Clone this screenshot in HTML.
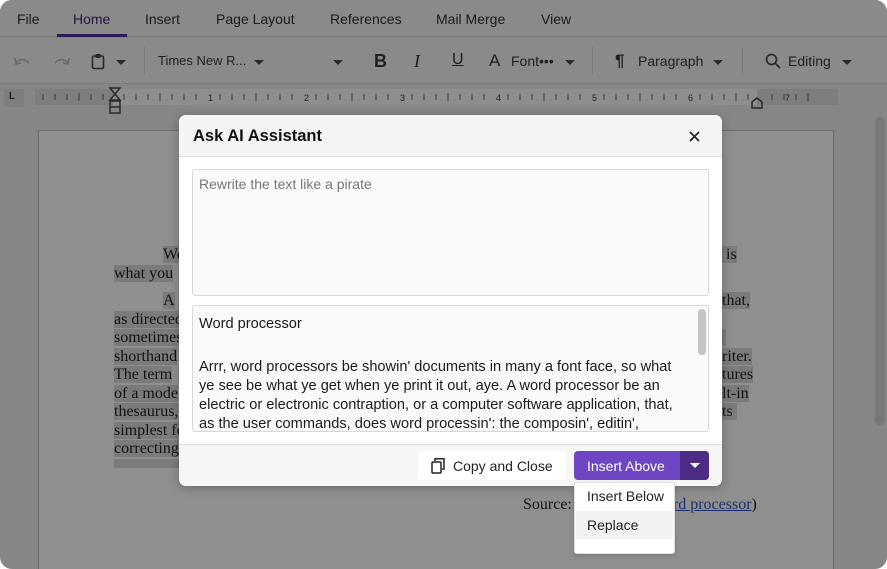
<!DOCTYPE html>
<html><head><meta charset="utf-8"><style>
*{box-sizing:border-box;margin:0;padding:0}
body{width:887px;height:569px;overflow:hidden;background:#fff;font-family:"Liberation Sans",sans-serif;position:relative}
.win{position:absolute;left:0;top:0;width:887px;height:569px;border-radius:12px;overflow:hidden;background:#868686}
.abs{position:absolute}
.menu{left:0;top:0;width:887px;height:37px;background:#8a8a8a;border-bottom:1px solid #7a7a7a}
.menu span{position:absolute;top:11px;font-size:14px;color:#1a1a1a}
.tb{left:0;top:38px;width:887px;height:46px;background:#8a8a8a;border-bottom:1px solid #7c7c7c}
.tb span{position:absolute;font-size:14px;color:#202020}
.car{position:absolute;width:0;height:0;border-left:5px solid transparent;border-right:5px solid transparent;border-top:5px solid #2a2a2a}
.doc{font-family:"Liberation Serif",serif;font-size:16px;color:#111;white-space:nowrap}
.hl{background:#7b7b7b}
</style></head><body><div class="win">
<div class="abs menu">
<span style="left:17px">File</span>
<span style="left:73px;color:#2a1245">Home</span>
<span style="left:145px">Insert</span>
<span style="left:216px">Page Layout</span>
<span style="left:330px">References</span>
<span style="left:436px">Mail Merge</span>
<span style="left:541px">View</span>
<div class="abs" style="left:57px;top:34px;width:70px;height:3px;background:#2e1a55"></div>
</div>
<div class="abs tb">
<svg class="abs" style="left:13px;top:17px" width="20" height="14" viewBox="0 0 20 14"><path d="M3 8 Q9 1 16 8" stroke="#6a6a6a" stroke-width="1.6" fill="none"/><path d="M2 3 L3 9 L8 8" stroke="#6a6a6a" stroke-width="1.6" fill="none"/></svg>
<svg class="abs" style="left:51px;top:17px" width="20" height="14" viewBox="0 0 20 14"><path d="M4 8 Q11 1 17 8" stroke="#6a6a6a" stroke-width="1.6" fill="none"/><path d="M18 3 L17 9 L12 8" stroke="#6a6a6a" stroke-width="1.6" fill="none"/></svg>
<svg class="abs" style="left:91px;top:15px" width="14" height="17" viewBox="0 0 14 17"><rect x="1.5" y="3" width="11" height="12.5" rx="1.5" stroke="#2a2a2a" stroke-width="1.6" fill="none"/><rect x="4.5" y="1" width="5" height="4" fill="#2a2a2a"/></svg>
<div class="car" style="left:116px;top:22px"></div>
<div class="abs" style="left:144px;top:9px;width:1px;height:28px;background:#7a7a7a"></div>
<span style="left:158px;top:15px;font-size:13px">Times New R...</span>
<div class="car" style="left:254px;top:22px"></div>
<div class="car" style="left:333px;top:22px"></div>
<span style="left:374px;top:13px;font-size:18px;font-weight:bold">B</span>
<span style="left:414px;top:13px;font-size:18px;font-style:italic;font-family:'Liberation Serif'">I</span>
<span style="left:452px;top:13px;font-size:16px;text-decoration:underline">U</span>
<span style="left:489px;top:13px;font-size:17px">A</span>
<span style="left:511px;top:15px">Font•••</span>
<div class="car" style="left:565px;top:22px"></div>
<div class="abs" style="left:592px;top:9px;width:1px;height:28px;background:#7a7a7a"></div>
<span style="left:615px;top:13px;font-size:17px;font-weight:bold">¶</span>
<span style="left:638px;top:15px">Paragraph</span>
<div class="car" style="left:713px;top:22px"></div>
<div class="abs" style="left:742px;top:9px;width:1px;height:28px;background:#7a7a7a"></div>
<svg class="abs" style="left:765px;top:15px" width="16" height="16" viewBox="0 0 16 16"><circle cx="6.5" cy="6.5" r="5" stroke="#2a2a2a" stroke-width="1.7" fill="none"/><path d="M10 10 L15 15" stroke="#2a2a2a" stroke-width="1.8"/></svg>
<span style="left:788px;top:15px">Editing</span>
<div class="car" style="left:842px;top:22px"></div>
</div>
<div class="abs" style="left:4px;top:89px;width:20px;height:18px;background:#7e7e7e"></div>
<span class="abs" style="left:9px;top:91px;font-size:10px;font-weight:bold;color:#222">L</span>
<div class="abs" style="left:35px;top:89px;width:803px;height:16px;background:#8e8e8e"></div>
<div class="abs" style="left:35px;top:89px;width:78px;height:16px;background:#7e7e7e"></div>
<div class="abs" style="left:757px;top:89px;width:81px;height:16px;background:#7e7e7e"></div>
<svg class="abs" style="left:35px;top:89px" width="803" height="16">
<g stroke="#3a3a3a" stroke-width="1">
<path d="M8 5v6M20 5v6M32 5v6M44 4v8M56 5v6M68 5v6M89 5v6M101 5v6M113 5v6M125 4v8M137 5v6M149 5v6M161 5v6M185 5v6M197 5v6M209 5v6M221 4v8M233 5v6M245 5v6M257 5v6M281 5v6M293 5v6M305 5v6M317 4v8M329 5v6M341 5v6M353 5v6M377 5v6M389 5v6M401 5v6M413 4v8M425 5v6M437 5v6M449 5v6M473 5v6M485 5v6M497 5v6M509 4v8M521 5v6M533 5v6M545 5v6M569 5v6M581 5v6M593 5v6M605 4v8M617 5v6M629 5v6M641 5v6M665 5v6M677 5v6M689 5v6M701 4v8M713 5v6M737 5v6M749 5v6M761 5v6M773 4v8"/>
</g>
<g font-size="9" fill="#222" font-family="Liberation Sans"><text x="173" y="12">1</text><text x="269" y="12">2</text><text x="365" y="12">3</text><text x="461" y="12">4</text><text x="557" y="12">5</text><text x="653" y="12">6</text><text x="750" y="12">7</text></g>
</svg>
<svg class="abs" style="left:108px;top:87px" width="14" height="28"><path d="M2 1h10L2 13h10z" stroke="#2a2a2a" stroke-width="1.5" fill="none"/><rect x="2" y="14" width="10" height="12" stroke="#2a2a2a" stroke-width="1.5" fill="none"/><path d="M2 20h10" stroke="#2a2a2a" stroke-width="1.5"/></svg>
<svg class="abs" style="left:750px;top:97px" width="14" height="12"><path d="M2 11V5l5-4 5 4v6z" stroke="#2a2a2a" stroke-width="1.5" fill="none"/></svg>
<div class="abs" style="left:38px;top:130px;width:796px;height:450px;background:#8f8f8f;border:1px solid #6e6e6e"></div>
<div class="abs" style="left:875px;top:117px;width:10px;height:308px;background:#777;border-radius:5px"></div>
<div class="abs doc" style="left:114px;top:246px;line-height:18.5px">
<div style="padding-left:49px"><span class="hl">We</span></div>
<div><span class="hl">what you </span></div>
<div style="height:9px"></div>
<div style="padding-left:49px"><span class="hl">A</span></div>
<div><span class="hl">as directed</span></div>
<div><span class="hl">sometimes</span></div>
<div><span class="hl">shorthand</span></div>
<div><span class="hl">The term </span></div>
<div><span class="hl">of a mode</span></div>
<div><span class="hl">thesaurus,</span></div>
<div><span class="hl">simplest fo</span></div>
<div><span class="hl">correcting</span></div>
</div>
<div class="abs doc hl" style="left:114px;top:459px;width:66px;height:9px"></div>
<div class="abs doc" style="left:722px;top:246px;line-height:18.5px">
<div><span class="hl">&nbsp;is</span></div><div>&nbsp;</div><div style="height:9px"></div>
<div><span class="hl">that,</span></div><div>&nbsp;</div><div><span class="hl">&nbsp;</span></div>
<div><span class="hl">riter.</span></div><div><span class="hl">tures</span></div><div><span class="hl">lt-in</span></div><div><span class="hl">ts&nbsp;</span></div>
</div>
<div class="abs doc" style="left:523px;top:496px">Source: <span style="margin-left:97px;color:#1d2f6e;text-decoration:underline">rd processor</span>)</div>
<div class="abs" style="left:179px;top:115px;width:543px;height:371px;background:#fff;border-radius:7px;box-shadow:0 2px 10px rgba(0,0,0,.25);overflow:hidden">
<div class="abs" style="left:0;top:0;width:543px;height:42px;background:#f4f4f4;border-bottom:1px solid #ddd"></div>
<span class="abs" style="left:14px;top:12px;font-size:16.5px;font-weight:bold;color:#111">Ask AI Assistant</span>
<svg class="abs" style="left:510px;top:16px" width="11" height="11"><path d="M1 1L10 10M10 1L1 10" stroke="#222" stroke-width="1.7"/></svg>
<div class="abs" style="left:13px;top:54px;width:517px;height:127px;background:#fafafa;border:1px solid #d8d8d8;border-radius:3px"></div>
<span class="abs" style="left:20px;top:61px;font-size:14px;color:#777">Rewrite the text like a pirate</span>
<div class="abs" style="left:13px;top:190px;width:517px;height:127px;background:#fafafa;border:1px solid #d8d8d8;border-radius:3px;overflow:hidden">
<div class="abs" style="left:505px;top:3px;width:8px;height:46px;background:#c4c4c4;border-radius:4px"></div>
<div class="abs" style="left:6px;top:9px;font-size:14.6px;color:#1a1a1a;line-height:19px;white-space:nowrap"><div>Word processor</div><div style="height:24px"></div><div>Arrr, word processors be showin' documents in many a font face, so what<br>ye see be what ye get when ye print it out, aye. A word processor be an<br>electric or electronic contraption, or a computer software application, that,<br>as the user commands, does word processin': the composin', editin',</div></div>
</div>
<div class="abs" style="left:0;top:329px;width:543px;height:42px;background:#f6f6f6;border-top:1px solid #ddd"></div>
<div class="abs" style="left:239px;top:336px;width:148px;height:29px;background:#fff;border-radius:4px"></div>
<svg class="abs" style="left:252px;top:342px" width="15" height="17"><rect x="1" y="5" width="9" height="11" rx="1" stroke="#222" stroke-width="1.5" fill="none"/><path d="M4 4V1.8h9V12h-2" stroke="#222" stroke-width="1.5" fill="none"/></svg>
<span class="abs" style="left:274px;top:343px;font-size:14px;color:#222">Copy and Close</span>
<div class="abs" style="left:395px;top:336px;width:135px;height:29px;background:#6e45c2;border-radius:4px;overflow:hidden"><div class="abs" style="left:106px;top:0;width:29px;height:29px;background:#4d2c85"></div></div>
<span class="abs" style="left:408px;top:343px;font-size:14px;color:#fff">Insert Above</span>
<div class="abs" style="left:511px;top:348px;border-left:5px solid transparent;border-right:5px solid transparent;border-top:5px solid #fff"></div>
</div>
<div class="abs" style="left:574px;top:482px;width:101px;height:72px;background:#fff;border:1px solid #ddd;border-radius:3px;box-shadow:0 2px 5px rgba(0,0,0,.15)"></div>
<div class="abs" style="left:576px;top:511px;width:97px;height:28px;background:#f2f2f2"></div>
<span class="abs" style="left:587px;top:488px;font-size:14px;color:#222">Insert Below</span>
<span class="abs" style="left:587px;top:517px;font-size:14px;color:#222">Replace</span>
</div></body></html>
